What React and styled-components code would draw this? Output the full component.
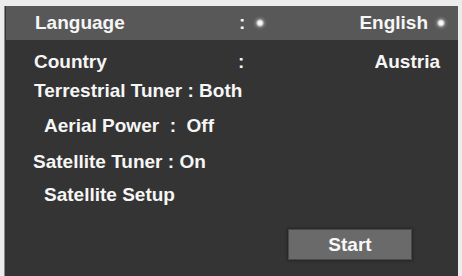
import React from "react";
import styled, { createGlobalStyle } from "styled-components";

const Global = createGlobalStyle`
  html, body { margin: 0; padding: 0; }
  body {
    background: #ececec;
    width: 462px;
    height: 276px;
    overflow: hidden;
    font-family: "Liberation Sans", Arial, sans-serif;
  }
`;

const Panel = styled.div`
  margin: 6px 0 0 4px;
  width: 454px;
  height: 270px;
  background: #343434;
  border-left: 1px solid #8a8a8a;
  box-sizing: border-box;
  display: flex;
  flex-direction: column;
  color: #f6f6f6;
  font-weight: 700;
  font-size: 19px;
`;

const SettingRow = styled.div`
  display: grid;
  grid-template-columns: 204px 40px 1fr;
  align-items: center;
  height: ${(p) => p.$h}px;
  line-height: ${(p) => p.$h}px;
  margin-top: ${(p) => p.$top || 0}px;
  padding: 0 18px 0 29px;
  background: ${(p) => (p.$active ? "#585858" : "transparent")};
  margin-left: ${(p) => (p.$active ? 1 : 0)}px;
`;

const Label = styled.span`
  white-space: pre;
`;

const Colon = styled.span`
  display: flex;
  align-items: center;
  gap: 11px;
`;

const Value = styled.span`
  display: flex;
  align-items: center;
  justify-content: flex-end;
`;

const Dot = styled.span`
  display: inline-block;
  flex-shrink: 0;
  width: 8px;
  height: 8px;
  border-radius: 50%;
  background: radial-gradient(circle, #ffffff 0%, #f2f2f2 35%, rgba(255,255,255,0.35) 70%, rgba(255,255,255,0) 100%);
  box-shadow: 0 0 3px 1px rgba(255, 255, 255, 0.3);
  margin-left: ${(p) => p.$ml || 0}px;
  margin-right: ${(p) => p.$mr || 0}px;
`;

const LineItem = styled.div`
  height: 22px;
  line-height: 22px;
  white-space: pre;
  margin-top: ${(p) => p.$top}px;
  padding-left: ${(p) => p.$indent}px;
`;

const Footer = styled.div`
  display: flex;
  justify-content: flex-end;
  padding-right: 46px;
  margin-top: 23px;
`;

const StartButton = styled.div`
  width: 124px;
  height: 31px;
  box-sizing: border-box;
  background: #6a6a6a;
  border: 1px solid #4a4a4a;
  box-shadow: 0 0 2px 1px #262626;
  display: flex;
  align-items: center;
  justify-content: center;
  font-size: 19px;
  color: #f8f8f8;
`;

export default function App() {
  return (
    <>
      <Global />
      <Panel>
        <SettingRow $active $h={34}>
          <Label>Language</Label>
          <Colon>
            :<Dot />
          </Colon>
          <Value>
            English
            <Dot $ml={9} $mr={-5} />
          </Value>
        </SettingRow>
        <SettingRow $h={22} $top={11}>
          <Label>Country</Label>
          <Colon>:</Colon>
          <Value>Austria</Value>
        </SettingRow>
        <LineItem $top={7} $indent={29}>Terrestrial Tuner : Both</LineItem>
        <LineItem $top={13} $indent={39}>{"Aerial Power  :  Off"}</LineItem>
        <LineItem $top={14} $indent={28}>Satellite Tuner : On</LineItem>
        <LineItem $top={11} $indent={39}>Satellite Setup</LineItem>
        <Footer>
          <StartButton>Start</StartButton>
        </Footer>
      </Panel>
    </>
  );
}
